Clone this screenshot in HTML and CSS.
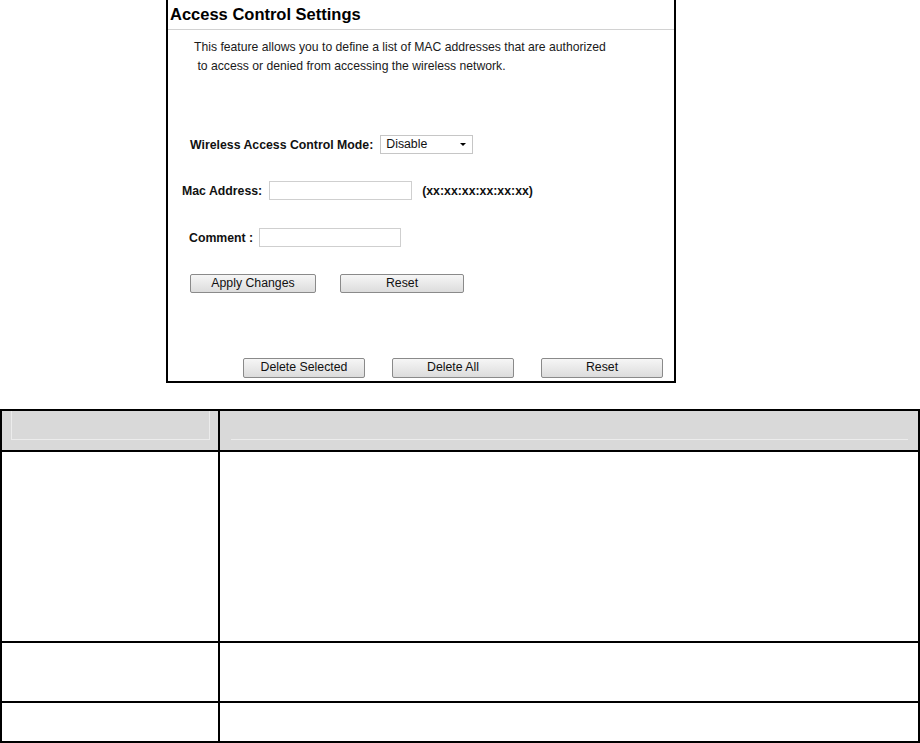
FILE: index.html
```html
<!DOCTYPE html>
<html>
<head>
    <link rel="stylesheet" href="styles.css">
</head>

<body>
    <div class="shot">
        <h1 class="shot-title">Access Control Settings</h1>
        <p class="intro">
            This feature allows you to define a list of MAC addresses that are authorized<br>
            &nbsp;to access or denied from accessing the wireless network.
        </p>
        <div class="row row-mode">
            <span class="label">Wireless Access Control Mode:</span>
            <span class="select">Disable<span class="caret"></span></span>
        </div>
        <div class="row row-mac">
            <span class="label">Mac Address:</span>
            <span class="input input-mac"></span>
            <span class="hint">(xx:xx:xx:xx:xx:xx)</span>
        </div>
        <div class="row row-comment">
            <span class="label">Comment :</span>
            <span class="input input-comment"></span>
        </div>
        <div class="row row-apply">
            <span class="btn btn-apply">Apply Changes</span>
            <span class="btn">Reset</span>
        </div>
        <div class="row row-delete">
            <span class="btn btn-small">Delete Selected</span>
            <span class="btn btn-small">Delete All</span>
            <span class="btn btn-small">Reset</span>
        </div>
    </div>

    <table class="desc">
        <tr class="head">
            <th class="col-name"><div class="bevel bevel-box"></div></th>
            <th><div class="bevel bevel-line"></div></th>
        </tr>
        <tr class="r1"><td></td><td></td></tr>
        <tr class="r2"><td></td><td></td></tr>
        <tr class="r3"><td></td><td></td></tr>
    </table>
</body>
</html>
```

FILE: styles.css
```css
body {
    margin: 0;
    font-family: "Liberation Sans", Arial, sans-serif;
    color: #000;
    background: #fff;
}

.shot {
    width: 506px;
    height: 381px;
    margin-left: 166px;
    border: 2px solid #000;
    border-top: none;
    display: flex;
    flex-direction: column;
}
.shot-title {
    margin: 0;
    height: 30px;
    padding-left: 2px;
    font-size: 16.5px;
    line-height: 29px;
    border-bottom: 1px solid #d2d2d2;
    box-sizing: border-box;
}
.intro {
    margin: 8px 0 0;
    padding-left: 26px;
    font-size: 12.2px;
    line-height: 19px;
    color: #1a1a1a;
}

.row {
    display: flex;
    align-items: center;
    height: 19px;
    font-size: 12.3px;
}
.label {
    font-weight: bold;
    color: #111;
}
.row-mode {
    margin-top: 59px;
    padding-left: 22px;
    gap: 7px;
}
.row-mac {
    margin-top: 27px;
    padding-left: 14px;
    gap: 7px;
}
.row-comment {
    margin-top: 28px;
    padding-left: 21px;
    gap: 6px;
}
.row-apply {
    margin-top: 27px;
    padding-left: 22px;
    gap: 24px;
}
.row-delete {
    margin-top: 65px;
    padding-left: 75px;
    gap: 27px;
    height: 20px;
}

.select {
    position: relative;
    width: 93px;
    height: 19px;
    box-sizing: border-box;
    border: 1px solid #c6c6c6;
    padding-left: 5px;
    line-height: 17px;
    color: #111;
}
.caret {
    position: absolute;
    right: 6px;
    top: 7px;
    border-left: 3px solid transparent;
    border-right: 3px solid transparent;
    border-top: 3px solid #000;
}
.input {
    height: 19px;
    box-sizing: border-box;
    border: 1px solid #cfcfcf;
}
.input-mac {
    width: 143px;
}
.input-comment {
    width: 142px;
}
.hint {
    margin-left: 3px;
    font-weight: bold;
    color: #111;
}

.btn {
    width: 124px;
    height: 100%;
    box-sizing: border-box;
    border: 1px solid #8a8a8a;
    border-radius: 2px;
    background: linear-gradient(#f6f6f6, #dcdcdc);
    text-align: center;
    line-height: 17px;
    color: #111;
}
.btn-apply {
    width: 126px;
}
.btn-small {
    width: 122px;
}

.desc {
    margin-top: 26px;
    width: 920px;
    border-collapse: collapse;
}
.desc th, .desc td {
    border: 2px solid #000;
    padding: 0;
}
.desc .col-name {
    width: 216px;
}
.head {
    height: 41px;
    background: #d9d9d9;
}
.head th {
    vertical-align: top;
}
.bevel {
    height: 28px;
}
.bevel-box {
    margin: 0 8px 0 9px;
    border: 1px solid #ececec;
    border-top: none;
}
.bevel-line {
    margin: 0 10px 0 11px;
    border-bottom: 1px solid #ececec;
}
.r1 {
    height: 191px;
}
.r2 {
    height: 60px;
}
.r3 {
    height: 40px;
}
```
